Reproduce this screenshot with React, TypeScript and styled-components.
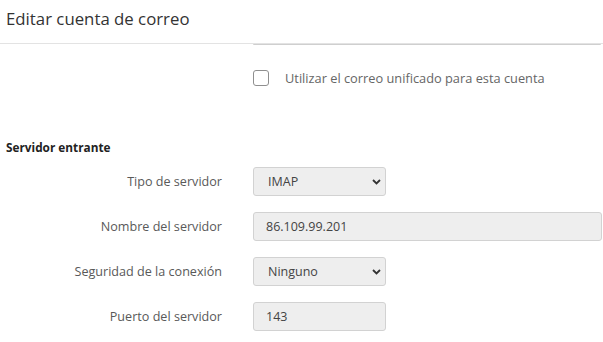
import React from "react";
import styled, { createGlobalStyle } from "styled-components";

const FONT = `"Open Sans", "Noto Sans", sans-serif`;

const GlobalStyle = createGlobalStyle`
  html, body {
    margin: 0;
    padding: 0;
    background: #ffffff;
    font-family: ${FONT};
  }
`;

const Page = styled.div`
  width: 603px;
  height: 342px;
  overflow: hidden;
  background: #fff;
`;

const Header = styled.header`
  box-sizing: border-box;
  height: 44px;
  border-bottom: 1px solid #e3e3e3;
  padding-left: 6px;
  display: flex;
  align-items: center;
`;

const Title = styled.h1`
  margin: 0 0 6px;
  font-size: 16.8px;
  font-weight: 400;
  color: #333;
`;

const Body = styled.div`
  display: flex;
  flex-direction: column;
`;

const FieldStub = styled.div`
  margin-left: 253px;
  margin-right: 2px;
  height: 1px;
  background: #cfcfcf;
  border-radius: 0 0 3px 3px;
`;

const CheckRow = styled.label`
  display: flex;
  align-items: center;
  gap: 16px;
  margin: 24px 0 0 253px;
  font-size: 12.8px;
  color: #666;
`;

const Box = styled.span`
  width: 16px;
  height: 16px;
  box-sizing: border-box;
  border: 1px solid #8f8f8f;
  border-radius: 3px;
  background: #fff;
`;

const SectionTitle = styled.h2`
  margin: 52px 0 0 6px;
  font-size: 11.8px;
  line-height: 16px;
  font-weight: 700;
  color: #222;
`;

const Form = styled.div`
  display: grid;
  grid-template-columns: 222px auto;
  column-gap: 31px;
  row-gap: 16px;
  margin-top: 12px;
  align-items: center;
`;

const Label = styled.span`
  text-align: right;
  font-size: 12.6px;
  color: #595959;
`;

const fieldBase = `
  box-sizing: border-box;
  height: 29px;
  border: 1px solid #d2d2d2;
  border-radius: 3px;
  background: #eeeeee;
  font-family: ${FONT};
  font-size: 12.5px;
  color: #444;
  outline: none;
`;

const TextInput = styled.input<{ $wide?: boolean }>`
  ${fieldBase}
  width: ${(p) => (p.$wide ? "349px" : "133px")};
  padding: 0 12px;
`;

const SelectWrap = styled.div`
  position: relative;
  width: 133px;
  height: 29px;
`;

const NativeSelect = styled.select`
  ${fieldBase}
  width: 100%;
  padding: 0 24px 0 14px;
  appearance: none;
  -webkit-appearance: none;
`;

const Chevron = styled.svg`
  position: absolute;
  right: 5px;
  top: 12px;
  pointer-events: none;
`;

const Select = ({ value, options }: { value: string; options: string[] }) => (
  <SelectWrap>
    <NativeSelect defaultValue={value}>
      {options.map((o) => (
        <option key={o}>{o}</option>
      ))}
    </NativeSelect>
    <Chevron width="9" height="6" viewBox="0 0 9 6">
      <path d="M1 1l3.5 3.5L8 1" fill="none" stroke="#333" strokeWidth="1.8" />
    </Chevron>
  </SelectWrap>
);

export default function App() {
  return (
    <Page>
      <GlobalStyle />
      <Header>
        <Title>Editar cuenta de correo</Title>
      </Header>
      <Body>
        <FieldStub />
        <CheckRow>
          <Box />
          Utilizar el correo unificado para esta cuenta
        </CheckRow>
        <SectionTitle>Servidor entrante</SectionTitle>
        <Form>
          <Label>Tipo de servidor</Label>
          <Select value="IMAP" options={["IMAP", "POP3"]} />
          <Label>Nombre del servidor</Label>
          <TextInput $wide defaultValue="86.109.99.201" />
          <Label>Seguridad de la conexión</Label>
          <Select value="Ninguno" options={["Ninguno", "SSL/TLS", "STARTTLS"]} />
          <Label>Puerto del servidor</Label>
          <TextInput defaultValue="143" />
        </Form>
      </Body>
    </Page>
  );
}
